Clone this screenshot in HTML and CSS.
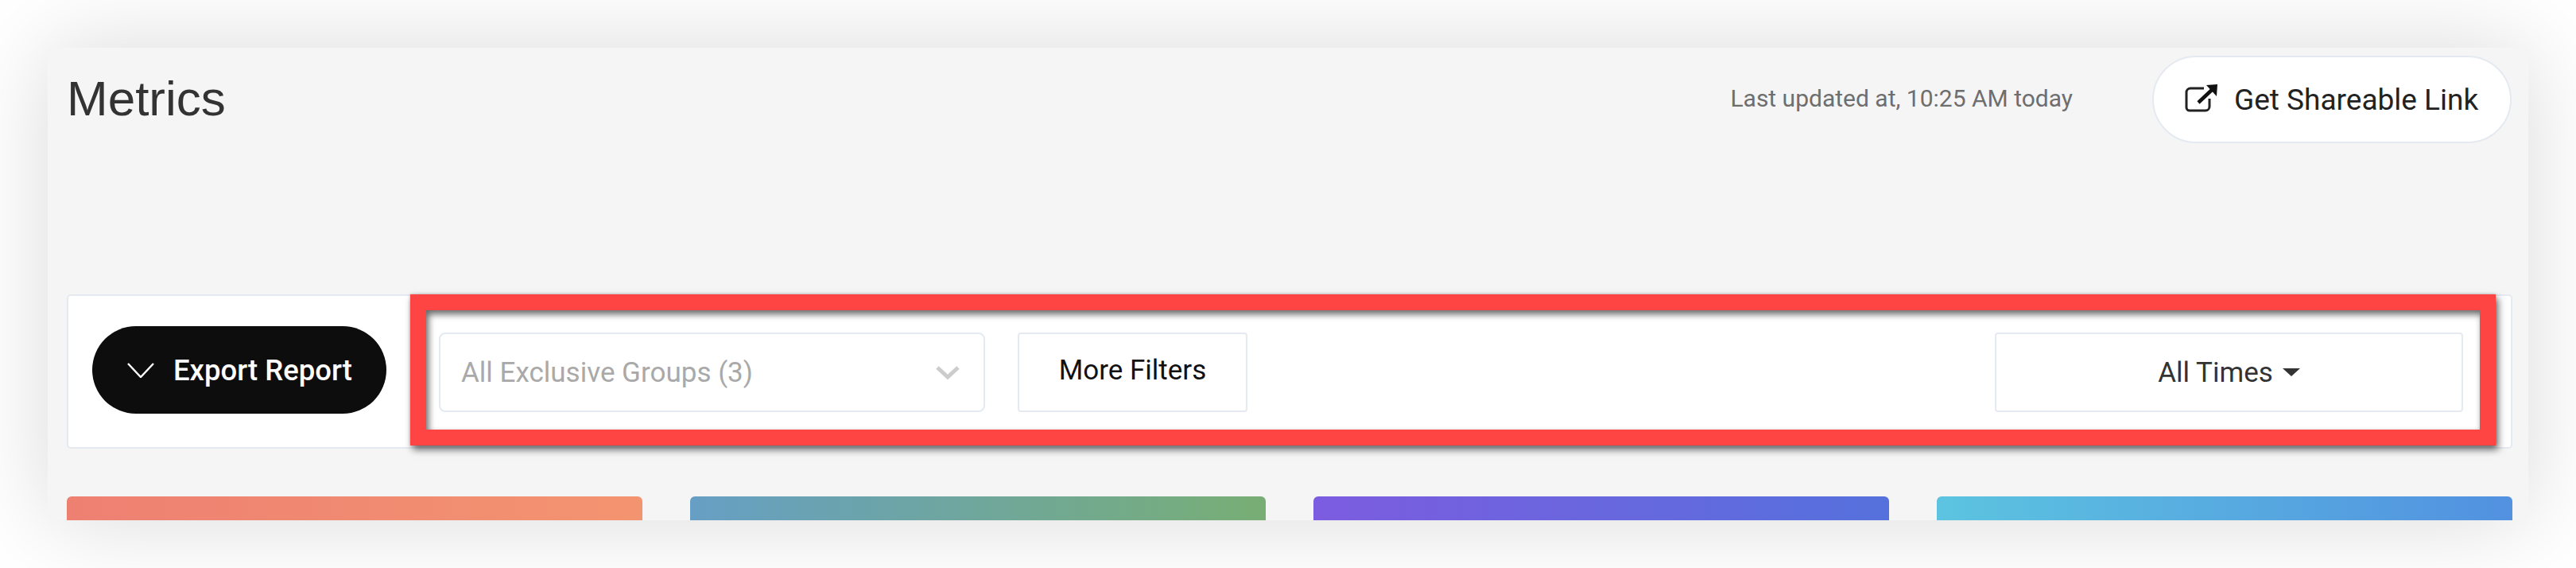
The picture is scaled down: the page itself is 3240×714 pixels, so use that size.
FILE: index.html
```html
<!DOCTYPE html>
<html lang="en">
<head>
<meta charset="utf-8">
<title>Metrics</title>
<link rel="stylesheet" href="styles.css">
</head>
<body>
<main class="panel">
  <header class="head">
    <h1 class="title">Metrics</h1>
    <span class="updated">Last updated at, 10:25 AM today</span>
    <button class="share">
      <svg class="share-icon" viewBox="0 0 42 35" aria-hidden="true">
        <path d="M24 5H7a5 5 0 0 0-5 5v19a4 4 0 0 0 4 4h20a5 5 0 0 0 5-5V18" fill="none" stroke="#222" stroke-width="3"/>
        <path d="M17 23L35 6" fill="none" stroke="#111" stroke-width="4.5"/>
        <path d="M27 1L41 0L40 15z" fill="#111"/>
      </svg>
      Get Shareable Link
    </button>
  </header>
  <section class="toolbar">
    <button class="export">
      <svg class="export-icon" viewBox="0 0 34 19" aria-hidden="true"><path d="M1 1l16 17L33 1" fill="none" stroke="#fff" stroke-width="2.4"/></svg>
      Export Report
    </button>
    <div class="select">
      <span>All Exclusive Groups (3)</span>
      <svg class="select-icon" viewBox="0 0 30 17" aria-hidden="true"><path d="M2 2l13 12L28 2" fill="none" stroke="#ccc" stroke-width="5"/></svg>
    </div>
    <button class="filters">More Filters</button>
    <button class="times">All Times<i class="caret"></i></button>
    <div class="highlight"></div>
  </section>
  <section class="bars">
    <div class="bar bar-a"></div>
    <div class="bar bar-b"></div>
    <div class="bar bar-c"></div>
    <div class="bar bar-d"></div>
  </section>
</main>
</body>
</html>
```
FILE: styles.css
```css
* { box-sizing: border-box; }
html, body { margin: 0; height: 714px; background: #fff; overflow: hidden; }
body { padding: 60px; font-family: Roboto, "Liberation Sans", sans-serif; }
button { font-family: inherit; cursor: pointer; }

.panel {
  height: 594px;
  padding: 10px 20px 0 24px;
  background: #f5f5f5;
  box-shadow: 0 0 110px rgba(0, 0, 0, .15);
  overflow: hidden;
}

.head { display: flex; align-items: flex-start; height: 110px; margin-right: 1px; }
.title { margin: 19px auto 0 0; font-family: "Liberation Sans", Arial, sans-serif; font-size: 62px; line-height: 70px; font-weight: 400; color: #333; }
.updated { margin: 36px 100px 0 0; font-size: 30px; line-height: 36px; color: #6e6e6e; }
.share {
  display: flex; align-items: center;
  width: 452px; height: 110px; padding: 0 0 0 39px;
  font-size: 37px; color: #222;
  background: #fff; border: 2px solid #e5eaf0; border-radius: 55px;
}
.share-icon { width: 42px; height: 35px; margin: -4px 20px 0 0; flex: none; }

.toolbar {
  position: relative;
  display: flex; align-items: center;
  height: 194px; margin-top: 190px;
  background: #fff; border: 2px solid #e5eaf0; border-radius: 5px;
}
.export {
  display: flex; align-items: center;
  width: 370px; height: 110px; margin: -4px 0 0 30px; padding: 1px 0 0 44px;
  font-size: 36.5px; font-weight: 500; color: #fff;
  background: #0d0d0d; border: 0; border-radius: 55px;
}
.export-icon { width: 34px; height: 19px; margin-right: 24px; flex: none; }
.select {
  display: flex; align-items: center; justify-content: space-between;
  width: 687px; height: 100px; margin: 1px 0 0 66px; padding: 2px 30px 0 26px;
  font-size: 35px; color: #a9a9a9;
  border: 2px solid #e5eaf0; border-radius: 8px;
}
.select-icon { width: 30px; height: 17px; }
.filters, .times {
  height: 100px; margin-top: 1px; font-size: 35px; background: #fff;
  border: 2px solid #e5eaf0; border-radius: 4px;
}
.filters { width: 289px; margin-left: 41px; color: #111; padding-bottom: 6px; }
.times {
  display: flex; align-items: center; justify-content: center;
  width: 589px; margin-left: 940px; padding-top: 2px; color: #333;
}
.caret {
  width: 0; height: 0; margin-left: 12px;
  border: solid transparent; border-width: 10px 11px 0; border-top-color: #333;
}
.highlight {
  position: absolute; left: 430px; top: -2px; width: 2623px; height: 190px;
  border: solid #ff4444; border-width: 20px;
  box-shadow: 3px 5px 9px rgba(0, 0, 0, .6), inset 3px 5px 9px rgba(0, 0, 0, .6), 0 0 3px rgba(0, 0, 0, .25);
}

.bars { display: grid; grid-template-columns: repeat(4, 1fr); gap: 60px; height: 60px; margin-top: 60px; }
.bar { border-radius: 6px 6px 0 0; }
.bar-a { background: linear-gradient(90deg, #ee8072, #f39470); }
.bar-b { background: linear-gradient(90deg, #669fc4, #78ae74); }
.bar-c { background: linear-gradient(90deg, #7c5ce0, #5571dc); }
.bar-d { background: linear-gradient(90deg, #5cc4e0, #5291e0); }
```
